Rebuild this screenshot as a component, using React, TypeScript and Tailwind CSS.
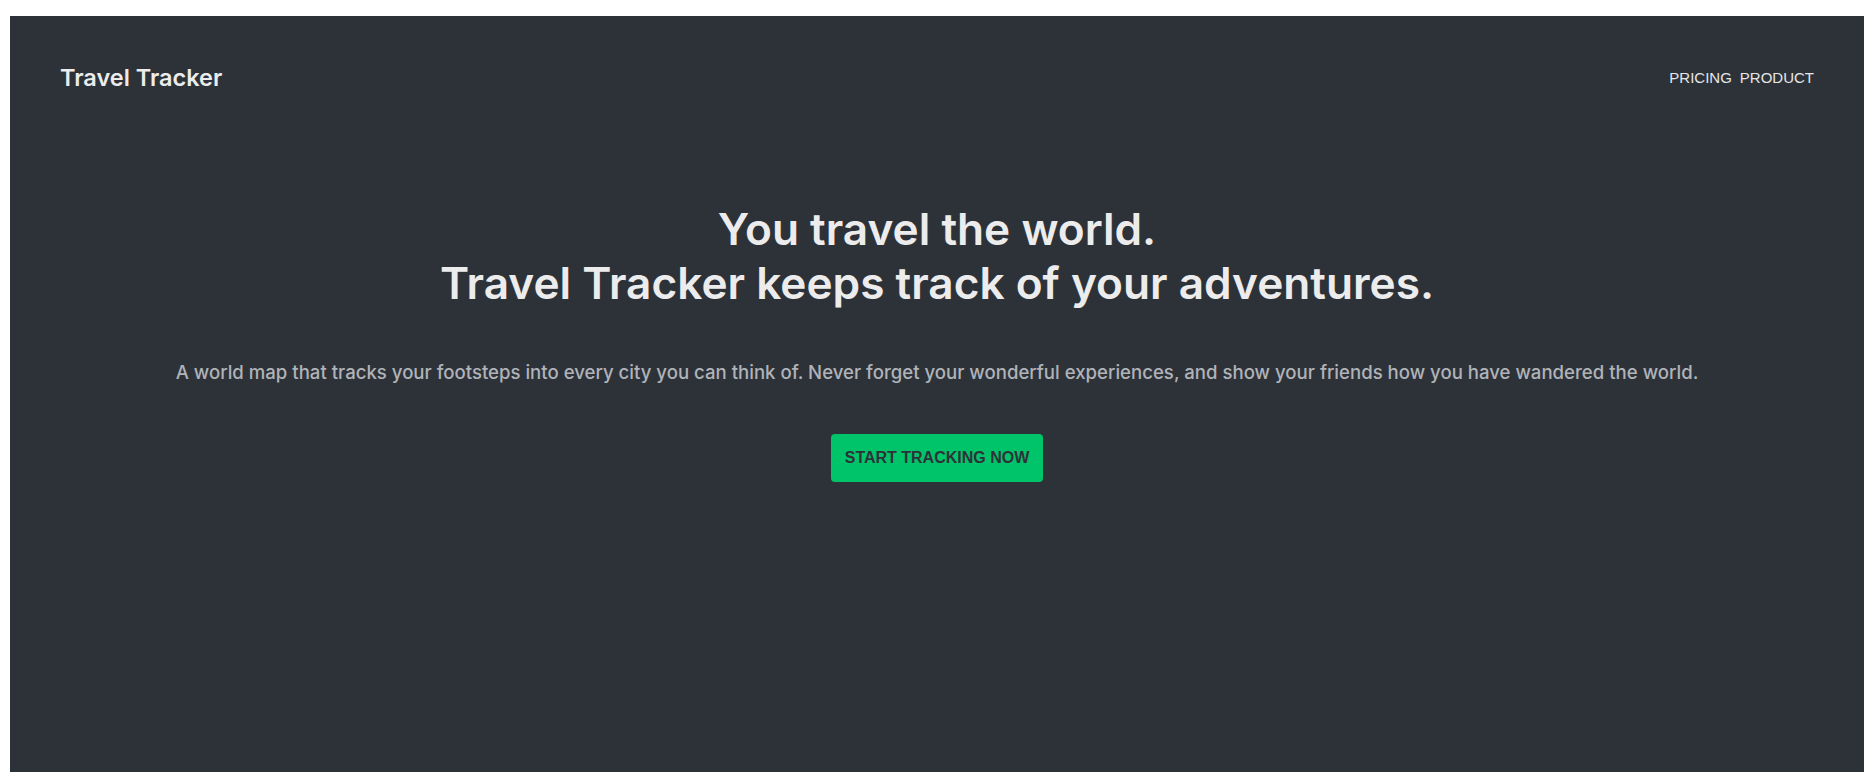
export default function App() {
  return (
    <div className="min-h-[783px] bg-white pt-[16px] pl-[10px]">
      <div className="w-[1854px] h-[756px] bg-[#2d3239] px-[50px] flex flex-col">
        <header className="pt-[45px] flex items-center justify-between h-[79px]">
          <div className="text-[23.5px] leading-[34px] font-semibold text-[#ececec] font-[family-name:Inter,sans-serif]">
            Travel Tracker
          </div>
          <nav className="flex gap-[8px] text-[15px] leading-[20px] text-[#e6e6e6] font-['Liberation_Sans',Arial,sans-serif]">
            <a>PRICING</a>
            <a>PRODUCT</a>
          </nav>
        </header>
        <main className="flex flex-col items-center text-center">
          <h1 className="mt-[107px] text-[44.2px] leading-[54px] font-semibold text-[#ececec] font-[family-name:Inter,sans-serif]">
            You travel the world.
            <br />
            Travel Tracker keeps track of your adventures.
          </h1>
          <p className="mt-[48px] text-[18.6px] leading-[28px] font-medium text-[#b0b3b8] font-[family-name:Inter,sans-serif]">
            A world map that tracks your footsteps into every city you can think of. Never forget your wonderful experiences, and show your friends how you have wandered the world.
          </p>
          <button className="mt-[48px] w-[212px] h-[48px] rounded-[4px] bg-[#00c46a] text-[#2d3239] text-[16px] font-bold font-['Liberation_Sans',Arial,sans-serif]">
            START TRACKING NOW
          </button>
        </main>
      </div>
    </div>
  );
}
